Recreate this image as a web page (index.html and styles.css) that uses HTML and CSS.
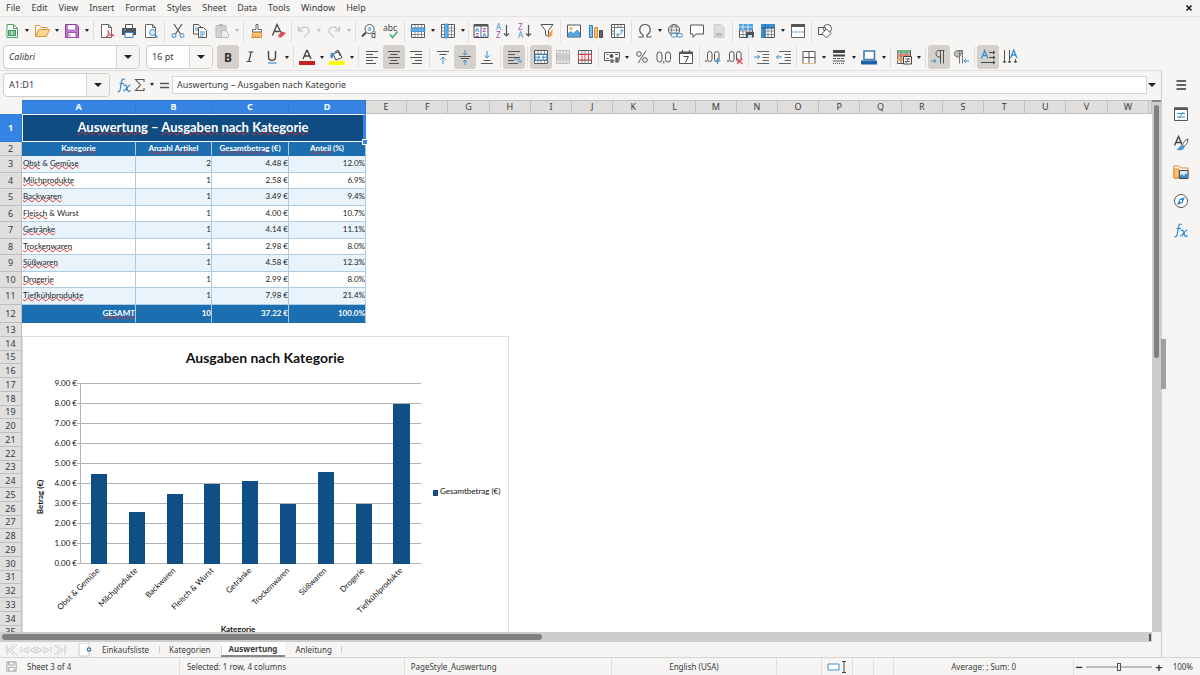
FILE: index.html
```html
<!DOCTYPE html>
<html lang="de">
<head>
<meta charset="utf-8">
<title>Auswertung</title>
<link rel="stylesheet" href="styles.css">
</head>
<body>
<svg class="sprite" aria-hidden="true">
  <symbol id="new" viewBox="0 0 16 16"><path d="M3 1.5h6.500l4 4v9h-10.500z" fill="#fff" stroke="#4aa564"/><path d="M9.500 1.500v4h4" fill="none" stroke="#4aa564"/><path d="M4 7h8v6h-8z" fill="#3a9c58"/><path d="M5 9h6M5 11h6M8 8v4" stroke="#fff" stroke-width=".7"/></symbol>
  <symbol id="open" viewBox="0 0 16 16"><path d="M1.500 13.500v-11h4l1.500 2h6v3" fill="#fff" stroke="#e0943c"/><path d="M1.500 13.500l3-7h11l-3 7z" fill="#fbd58d" stroke="#e0943c"/></symbol>
  <symbol id="save" viewBox="0 0 16 16"><path d="M1.500 1.500h11l2 2v11h-13z" fill="#c378cf" stroke="#8f3f9d"/><path d="M4 2h7v4.500h-7z" fill="#fff"/><path d="M4 9.500h8v5h-8z" fill="#fff" stroke="#8f3f9d" stroke-width=".8"/><path d="M6 11.500v2" stroke="#8f3f9d"/></symbol>
  <symbol id="pdf" viewBox="0 0 16 16"><path d="M2.500 1.500h7l3 3v10h-10z" fill="#fff" stroke="#666"/><path d="M9.500 1.500v3h3" fill="none" stroke="#666"/><path d="M9 7c1 4 3 6 6 6M9 8c1 3 0 5-2 7M7 14c2-2 5-3 8-2" fill="none" stroke="#d9404c"/></symbol>
  <symbol id="print" viewBox="0 0 16 16"><path d="M4.500 5v-3.500h7v3.500" fill="#fff" stroke="#555"/><path d="M1 5h14v7h-14z" fill="#4a5560"/><path d="M4 9.500h8v5h-8z" fill="#fff" stroke="#3b86c6"/><path d="M3 7h2" stroke="#7fc0f0"/></symbol>
  <symbol id="preview" viewBox="0 0 16 16"><path d="M2.500 1.500h7l3 3v10h-10z" fill="#fff" stroke="#666"/><path d="M9.500 1.500v3h3" fill="none" stroke="#666"/><circle cx="9.500" cy="9.500" r="3" fill="#d6ecfb" stroke="#3b8fd0"/><path d="M11.500 11.500l3 3" stroke="#3b8fd0" stroke-width="1.500"/></symbol>
  <symbol id="cut" viewBox="0 0 16 16"><path d="M4 1l6.500 10M12 1l-6.500 10" fill="none" stroke="#555" stroke-width="1.200"/><circle cx="4" cy="12.500" r="2" fill="none" stroke="#3b8fd0"/><circle cx="12" cy="12.500" r="2" fill="none" stroke="#3b8fd0"/></symbol>
  <symbol id="copy" viewBox="0 0 16 16"><path d="M1.500 1.500h5l2.500 2.500v7h-7.500z" fill="#fff" stroke="#555"/><path d="M6.500 4.500h5l3 3v7h-8z" fill="#fff" stroke="#555"/><path d="M3 5h3M3 7h3M8 9h5M8 11h5M8 13h3" stroke="#3b8fd0"/></symbol>
  <symbol id="paste" viewBox="0 0 16 16"><path d="M2 2.500h10v12h-10z" fill="#d2d2d2" stroke="#bbb"/><path d="M5 1h4v3h-4z" fill="#bbb"/><path d="M7.500 7.500h4l3 3v4h-7z" fill="#eee" stroke="#bbb"/></symbol>
  <symbol id="brush" viewBox="0 0 16 16"><path d="M7 1.500h2v5h3.500v2.500h-9v-2.500h3.500z" fill="#fff" stroke="#666"/><path d="M3.500 9.500h9v5h-10c1-1.500 1-3 1-5z" fill="#f9c97e" stroke="#d98a35"/><path d="M6 14v-2M9 14v-2" stroke="#d98a35"/></symbol>
  <symbol id="clear" viewBox="0 0 16 16"><path d="M1.500 12.500l4.500-11 4 8M3.500 8.500h5" fill="none" stroke="#444" stroke-width="1.300"/><path d="M7 12.500l4-4 4 1.500-5 4.500h-2z" fill="#e04552"/><path d="M7 12.500l2 2" stroke="#f6b0b5"/></symbol>
  <symbol id="undo" viewBox="0 0 16 16"><path d="M2.500 3v5h5M3 7.500c3-5 10-4 10 .5 0 3-3 4-5 6" fill="none" stroke="#c4c4c4" stroke-width="1.200"/></symbol>
  <symbol id="redo" viewBox="0 0 16 16"><path d="M13.500 3v5h-5M13 7.500c-3-5-10-4-10 .5 0 3 3 4 5 6" fill="none" stroke="#c4c4c4" stroke-width="1.200"/></symbol>
  <symbol id="find" viewBox="0 0 16 16"><circle cx="8.500" cy="6" r="4.500" fill="#fff" stroke="#555"/><path d="M5 9.500l-4 4" stroke="#444" stroke-width="1.800"/><text x="6.300" y="8.300" font-size="7" fill="#2b7fc4">a</text><text x="10" y="15" font-size="8" fill="#333">d</text></symbol>
  <symbol id="spell" viewBox="0 0 16 16"><text x="0" y="8" font-size="8.500" fill="#444">abc</text><path d="M7 11.500l2.500 3 5-6" fill="none" stroke="#3fae6a" stroke-width="1.500"/></symbol>
  <symbol id="grid" viewBox="0 0 16 16"><path d="M1.500 1.500h13v13h-13z" fill="#fff" stroke="#555"/><path d="M1.500 5h13M1.500 8h13M1.500 11.500h13M5 1.500v13M8 1.500v13M11.500 1.500v13" stroke="#777" stroke-width=".8"/></symbol>
  <symbol id="row" viewBox="0 0 16 16"><use href="#grid"/><path d="M1 5h14v3.500h-14z" fill="#5cb0ec" stroke="#2f80c2" stroke-width=".6"/></symbol>
  <symbol id="col" viewBox="0 0 16 16"><use href="#grid"/><path d="M4.500 1h3.500v14h-3.500z" fill="#5cb0ec" stroke="#2f80c2" stroke-width=".6"/></symbol>
  <symbol id="sort" viewBox="0 0 16 16"><path d="M1 1.500h14v13h-14z" fill="#fff" stroke="#444"/><path d="M1 1h14v2.500h-14z" fill="#555"/><path d="M8 3v11" stroke="#666"/><g font-size="6" font-weight="bold"><text x="2" y="8.500" fill="#3b8fd0">A</text><text x="2.500" y="14" fill="#a64fb5">Z</text><text x="9.500" y="8.500" fill="#a64fb5">Z</text><text x="9.300" y="14" fill="#3b8fd0">A</text></g></symbol>
  <symbol id="asc" viewBox="0 0 16 16"><text x="1" y="7" font-size="8" fill="#3b8fd0">A</text><text x="1" y="15" font-size="8" fill="#a64fb5">Z</text><path d="M11.500 2v11M9 10.500l2.500 2.500 2.500-2.500" fill="none" stroke="#555" stroke-width="1.200"/></symbol>
  <symbol id="desc" viewBox="0 0 16 16"><text x="1" y="7" font-size="8" fill="#a64fb5">Z</text><text x="1" y="15" font-size="8" fill="#3b8fd0">A</text><path d="M11.500 2v11M9 10.500l2.500 2.500 2.500-2.500" fill="none" stroke="#555" stroke-width="1.200"/></symbol>
  <symbol id="filter" viewBox="0 0 16 16"><path d="M2 1.500h12l-4.500 6v6l-3-1.500v-4.500z" fill="#fff" stroke="#555"/><path d="M9 15l1-5 4-4-1 5 1 1z" fill="#f2a74e"/></symbol>
  <symbol id="image" viewBox="0 0 16 16"><path d="M1.500 2h13v12h-13z" fill="#fff" stroke="#555"/><circle cx="5" cy="5.500" r="1.500" fill="#f2a74e"/><path d="M2 13.500v-3l3-2 2.500 2 3.500-3.500 3 3v3.500z" fill="#55a8e4" stroke="#2f80c2" stroke-width=".6"/></symbol>
  <symbol id="chart" viewBox="0 0 16 16"><path d="M1.500 2.500h3v12h-3z" fill="#7cc0f2" stroke="#2f80c2"/><path d="M6.500 4.500h3v10h-3z" fill="#fbc27a" stroke="#e0872c"/><path d="M11.500 7.500h3v7h-3z" fill="#666" stroke="#444"/></symbol>
  <symbol id="pivot" viewBox="0 0 16 16"><path d="M1.500 1.500h13v13h-13z" fill="#fff" stroke="#555"/><path d="M1.500 4.500h13M4.500 1.500v13M8 1.500v3M11 1.500v3M1.500 8h3M1.500 11h3" stroke="#777"/><path d="M7 12c4 0 5-2 5-5M10 8.500l2-2 2 2M8.500 10l-2 2 2 2" fill="none" stroke="#3b8fd0"/></symbol>
  <symbol id="omega" viewBox="0 0 16 16"><path d="M1.500 14h4.500v-2c-5-3-4-10.500 2-10.500s7 7.500 2 10.500v2h4.500" fill="none" stroke="#555" stroke-width="1.200"/></symbol>
  <symbol id="globe" viewBox="0 0 16 16"><circle cx="7" cy="7" r="5.500" fill="#fff" stroke="#555"/><ellipse cx="7" cy="7" rx="2.500" ry="5.500" fill="none" stroke="#666" stroke-width=".8"/><path d="M1.500 7h11M2.500 4h9M2.500 10h9" stroke="#666" stroke-width=".8"/><rect x="4" y="10.500" width="6" height="3.500" rx="1.700" fill="#fff" stroke="#3b8fd0"/><rect x="9.500" y="10.500" width="6" height="3.500" rx="1.700" fill="none" stroke="#3b8fd0"/></symbol>
  <symbol id="comment" viewBox="0 0 16 16"><path d="M1.500 2h13v9h-7.500l-3 3.500v-3.500h-2.500z" fill="#fff" stroke="#555"/></symbol>
  <symbol id="footer" viewBox="0 0 16 16"><path d="M3 1.500h7l3 3v10h-10z" fill="#ddd" stroke="#ccc"/><path d="M5 10h6v3h-6z" fill="#bbb"/></symbol>
  <symbol id="area" viewBox="0 0 16 16"><use href="#grid"/><path d="M1 1h14v6h-14z" fill="#4c9fdd"/><path d="M1 4h14M5 1v6M10 1v6" stroke="#fff" stroke-width=".7"/><path d="M8 9h8v5h-8z" fill="#4a5560"/><path d="M10 12h4v3h-4z" fill="#bfe0f7"/></symbol>
  <symbol id="freeze" viewBox="0 0 16 16"><use href="#grid"/><path d="M1 1h14v4h-10v10h-4z" fill="#3b8fd0"/><path d="M5 1v14M1 5h14" stroke="#1e5f96"/></symbol>
  <symbol id="split" viewBox="0 0 16 16"><path d="M1.500 1.500h13v13h-13z" fill="#fff" stroke="#666"/><path d="M1 1h14v3h-14z" fill="#555"/><path d="M1 9h14" stroke="#3b8fd0" stroke-dasharray="2.500 1"/></symbol>
  <symbol id="shapes" viewBox="0 0 16 16"><circle cx="10.500" cy="5.500" r="4" fill="#fff" stroke="#555"/><path d="M1.500 4.500h7v7h-7z" fill="none" stroke="#555"/><path d="M9.500 6l4.500 4.500-4.500 4.500-4.500-4.500z" fill="#fff" stroke="#555"/></symbol>
  <symbol id="bold" viewBox="0 0 16 16"><text x="4" y="12.500" font-size="12" font-weight="bold" fill="#333">B</text></symbol>
  <symbol id="italic" viewBox="0 0 16 16"><path d="M6.500 3h5M4.500 12.500h5M9.200 3l-2.400 9.500" stroke="#444" stroke-width="1.200"/></symbol>
  <symbol id="under" viewBox="0 0 16 16"><path d="M4.500 2v6c0 4.500 7 4.500 7 0v-6" fill="none" stroke="#444" stroke-width="1.400"/><path d="M4 14h8.500" stroke="#3b8fd0" stroke-width="1.200"/></symbol>
  <symbol id="color" viewBox="0 0 16 16"><path d="M4 10l3.700-8.500h.6l3.700 8.500M5.500 7h5" fill="none" stroke="#444" stroke-width="1.400"/><path d="M0 12h16v4h-16z" fill="#c9211e"/></symbol>
  <symbol id="fill" viewBox="0 0 16 16"><path d="M4 5l6-2.500 3 6-6 2.500z" fill="#fff" stroke="#444"/><path d="M6 3l3-2 2 6" fill="none" stroke="#444"/><path d="M1.500 9v-3.500c0-2 2-2 4-1.500l-2 5z" fill="#3b8fd0"/><path d="M0 12h16v4h-16z" fill="#ff0"/></symbol>
  <symbol id="left" viewBox="0 0 16 16"><path d="M2 2.500h12M2 5.500h7M2 8.500h12M2 11.500h7M2 14.500h10" stroke="#555"/></symbol>
  <symbol id="center" viewBox="0 0 16 16"><path d="M2 2.500h12M4.500 5.500h7M2 8.500h12M4.500 11.500h7M3 14.500h10" stroke="#555"/></symbol>
  <symbol id="right" viewBox="0 0 16 16"><path d="M2 2.500h12M7 5.500h7M2 8.500h12M7 11.500h7M4 14.500h10" stroke="#555"/></symbol>
  <symbol id="top" viewBox="0 0 16 16"><path d="M2 2.500h12M4.500 5.500h7" stroke="#555"/><path d="M8 15v-7M5.500 10.500l2.500-2.500 2.500 2.500" fill="none" stroke="#3b8fd0"/></symbol>
  <symbol id="middle" viewBox="0 0 16 16"><path d="M2 7.500h12M4 9.500h8" stroke="#555"/><path d="M8 1v5M6 4l2 2 2-2M8 16v-5M6 13l2-2 2 2" fill="none" stroke="#3b8fd0"/></symbol>
  <symbol id="bottom" viewBox="0 0 16 16"><path d="M2 14.500h12M4.500 11.500h7" stroke="#555"/><path d="M8 2v7M5.500 6.500l2.500 2.500 2.500-2.500" fill="none" stroke="#3b8fd0"/></symbol>
  <symbol id="wrap" viewBox="0 0 16 16"><path d="M2 2.500h12M2 5.500h7M2 8.500h12M2 11.500h6M2 14.500h10" stroke="#555"/><path d="M8 10h4c2 0 2 1 2 3M12 11.500l2 2 2-2" fill="none" stroke="#3b8fd0"/></symbol>
  <symbol id="merge" viewBox="0 0 16 16"><use href="#grid"/><path d="M2 5.500h12v5.500h-12z" fill="#fff" stroke="#2f80c2"/><path d="M2 8.200h5M14 8.200h-5M5 6.500l2 1.700-2 1.800M11 6.500l-2 1.700 2 1.800" fill="none" stroke="#3b8fd0"/></symbol>
  <symbol id="mergeoff" viewBox="0 0 16 16"><path d="M1.500 1.500h13v13h-13z" fill="#eee" stroke="#bbb"/><path d="M1.500 5h13M1.500 11h13M5 1.500v3.500M8 1.500v3.500M11.500 1.500v3.500M5 11v3.500M8 11v3.500M11.500 11v3.500" stroke="#bbb"/><path d="M2 6h12v4.500h-12z" fill="#ccc"/></symbol>
  <symbol id="unmerge" viewBox="0 0 16 16"><use href="#grid"/><path d="M1.500 5.500h13v5.500h-13zM5 5.500v5.500M8 5.500v5.500M11.500 5.500v5.500" fill="#fff" stroke="#d9404c"/></symbol>
  <symbol id="currency" viewBox="0 0 16 16"><path d="M.5 3.500h15v8h-15z" fill="#fff" stroke="#555"/><circle cx="7.500" cy="7" r="2" fill="#555"/><path d="M2.500 5.500h2M11 5.500h3M2.500 9.500h2" stroke="#555"/><path d="M6 10h4v4h-4zM11 8h4v6h-4z" fill="#666" stroke="#fff" stroke-width=".6"/></symbol>
  <symbol id="percent" viewBox="0 0 16 16"><circle cx="5" cy="5" r="2.300" fill="none" stroke="#555"/><circle cx="11" cy="11" r="2.300" fill="none" stroke="#555"/><path d="M12 2l-8 12" stroke="#555"/></symbol>
  <symbol id="number" viewBox="0 0 16 16"><rect x="1" y="3" width="5" height="10" rx="2.500" fill="none" stroke="#555"/><rect x="9.500" y="3" width="5" height="10" rx="2.500" fill="none" stroke="#555"/><path d="M7.800 12v2.500" stroke="#555"/></symbol>
  <symbol id="date" viewBox="0 0 16 16"><path d="M1.500 3h13v11.500h-13z" fill="#fff" stroke="#555"/><path d="M1.500 4h13" stroke="#555" stroke-width="2"/><path d="M4.500 1v2M11.500 1v2M5.500 7.500h5l-3 6" fill="none" stroke="#444"/></symbol>
  <symbol id="zeros" viewBox="0 0 16 16"><path d="M1 11v2" stroke="#555" stroke-width="1.200"/><rect x="2.500" y="2.500" width="4.500" height="10" rx="2.200" fill="none" stroke="#555"/><rect x="9.500" y="2.500" width="4.500" height="10" rx="2.200" fill="none" stroke="#555"/></symbol>
  <symbol id="decadd" viewBox="0 0 16 16"><use href="#zeros"/><path d="M12.500 9v6M9.500 12h6" stroke="#3b8fd0" stroke-width="1.200"/></symbol>
  <symbol id="decdel" viewBox="0 0 16 16"><use href="#zeros"/><path d="M10 9.500l5.500 5.500M15.500 9.500l-5.500 5.500" stroke="#e04552" stroke-width="1.200"/></symbol>
  <symbol id="indent" viewBox="0 0 16 16"><path d="M3 2.500h12M8.500 5.500h6.500M8.500 8.500h6.500M8.500 11.500h6.500M3 14.500h12" stroke="#666"/><path d="M0 8h5.500M3.500 6l2 2-2 2" fill="none" stroke="#3b8fd0"/></symbol>
  <symbol id="outdent" viewBox="0 0 16 16"><path d="M3 2.500h12M8.500 5.500h6.500M8.500 8.500h6.500M8.500 11.500h6.500M3 14.500h12" stroke="#666"/><path d="M6 8h-5.500M2.500 6l-2 2 2 2" fill="none" stroke="#3b8fd0"/></symbol>
  <symbol id="borders" viewBox="0 0 16 16"><path d="M2 2.500h12v12h-12zM8 2.500v12M2 8.500h12" fill="#fff" stroke="#555"/><path d="M2 14.500h12" stroke="#e6b97c"/></symbol>
  <symbol id="lines" viewBox="0 0 16 16"><path d="M2 2.500h12" stroke="#444" stroke-width="3"/><path d="M2 6.500h12" stroke="#444" stroke-width="2"/><path d="M2 9.500h12" stroke="#555" stroke-dasharray="3 1"/><path d="M2 12h12" stroke="#555"/><path d="M2 14.500h12" stroke="#555" stroke-dasharray="1 1"/></symbol>
  <symbol id="bcolor" viewBox="0 0 16 16"><path d="M3 2h10.500v8.500h-10.500z" fill="#fff" stroke="#3b7db5" stroke-width="1.600"/><path d="M0 11.500h16v4h-16z" fill="#1e63a4"/></symbol>
  <symbol id="cond" viewBox="0 0 16 16"><use href="#grid"/><path d="M1 1h13v3h-13z" fill="#6cc08b"/><path d="M1 5h13v3h-13z" fill="#ee8b72"/><path d="M1 9h6v3h-6z" fill="#f7b65c"/><path d="M1.500 1.500v12.500M5 1.500v12.500M10 1.500v6" stroke="#777" stroke-width=".7"/><path d="M7.500 7.500h8v7.500h-8z" fill="#fff" stroke="#444"/><path d="M9 10h5M9 12.500h5M13 9l-3 5" stroke="#444" stroke-width=".8"/></symbol>
  <symbol id="ltr" viewBox="0 0 16 16"><path d="M13.500 1.500h-5.500c-4 0-4 6.500 0 6.500h1.500M9.500 2v12.500M12.500 2v12.500" fill="none" stroke="#555"/><path d="M0 12h5M3 10l2 2-2 2" fill="none" stroke="#3b8fd0"/></symbol>
  <symbol id="rtl" viewBox="0 0 16 16"><path d="M9.500 1.500h-4.500c-5 0-5 6.500 0 6.500h1.500z" fill="#bbb" stroke="#777"/><path d="M6.500 2v12.500M9.500 2v12.500" stroke="#777"/><path d="M16 12h-5M13 10l-2 2 2 2" fill="none" stroke="#3b8fd0"/></symbol>
  <symbol id="htext" viewBox="0 0 16 16"><path d="M1.500 9.500l3.200-8 3.200 8M2.800 6.500h4" fill="none" stroke="#3b8fd0" stroke-width="1.300"/><path d="M9 3.500h6M9 8.500h6M1 13.500h14M13 2l2 1.500-2 1.500M13 7l2 1.500-2 1.500M13 12l2 1.500-2 1.500" fill="none" stroke="#444"/></symbol>
  <symbol id="vtext" viewBox="0 0 16 16"><path d="M8.500 9l3.200-8 3.200 8M9.800 6h4" fill="none" stroke="#3b8fd0" stroke-width="1.300"/><path d="M2.500 1v13M7.500 1v13M13.500 10v4M1 12l1.500 2 1.500-2M6 12l1.500 2 1.500-2M12 12l1.500 2 1.500-2" fill="none" stroke="#555"/></symbol>
  <symbol id="fx" viewBox="0 0 16 16"><path d="M9 2.500c-2-1.200-3 0-3.400 2l-1.400 8c-.4 2-1.400 2.600-2.700 2M3.500 6.500h4.500" fill="none" stroke="#2f86cc" stroke-width="1.200"/><path d="M7.500 8.500c2.500-1.500 2.500 0 3.500 3s1.500 3.500 3.500 2M14.500 8c-3 0-4 6-7.500 6" fill="none" stroke="#2f86cc" stroke-width="1.200"/></symbol>
  <symbol id="sigma" viewBox="0 0 16 16"><path d="M12 5v-2.500h-8.500l5 5.500-5 5.500h8.500v-2.500" fill="none" stroke="#555" stroke-width="1.100"/></symbol>
  <symbol id="equal" viewBox="0 0 16 16"><path d="M4 6.500h9M4 10.500h9" stroke="#555" stroke-width="1.600"/></symbol>
  <symbol id="menu" viewBox="0 0 16 16"><path d="M3.500 4h9.500M3.500 8h9.500M3.500 12h9.500" stroke="#333" stroke-width="1.500"/></symbol>
  <symbol id="props" viewBox="0 0 16 16"><path d="M1.500 2h13v12.500h-13z" fill="#fff" stroke="#555"/><path d="M1 1.500h14v2.500h-14z" fill="#555"/><path d="M4 7.500h8M4 11h8M10 6l-2 3M8 9.500l-2 3" stroke="#3b8fd0"/></symbol>
  <symbol id="styles" viewBox="0 0 16 16"><path d="M1.500 10.500l4-9 3.500 8M3 7.500h5" fill="none" stroke="#444" stroke-width="1.400"/><path d="M15 4c-3 1-5 4-5.500 6l1.500 1.500c2-1.500 4-4 4-7.500z" fill="#fff" stroke="#555"/><path d="M9 10.500c-3 0-2 3-5 4 4 1 7 0 7-2.500z" fill="#4c9fdd" stroke="#2f80c2" stroke-width=".6"/></symbol>
  <symbol id="gallery" viewBox="0 0 16 16"><path d="M1 14v-12h5l1.500 2h7.500v10z" fill="#fff" stroke="#e0872c"/><path d="M1 14v-9h5v9z" fill="#f8c16e" stroke="#e0872c"/><path d="M6.500 6.500h8.500v8h-8.500z" fill="#d8eefc" stroke="#444"/><path d="M7 14v-2l2-2 2 2 2-3 1.500 2v3z" fill="#3b8fd0"/></symbol>
  <symbol id="navigator" viewBox="0 0 16 16"><circle cx="8" cy="8" r="6.500" fill="#fff" stroke="#555"/><path d="M12 4l-2.500 6-5.500 2 2.500-6z" fill="#2f86cc"/><circle cx="8" cy="8" r="1.200" fill="#fff"/></symbol>
</svg>

<nav class="menubar">
  <button>File</button><button>Edit</button><button>View</button><button>Insert</button><button>Format</button><button>Styles</button><button>Sheet</button><button>Data</button><button>Tools</button><button>Window</button><button>Help</button>
  <button class="close" aria-label="Close"><svg viewBox="0 0 8 8"><path d="M1.500 1.500l5 5M6.500 1.500l-5 5" stroke="#222" stroke-width="1.700"/></svg></button>
</nav>

<div class="toolbar standard">
  <button class="tb" aria-label="New"><svg><use href="#new"/></svg></button><button class="drop" aria-label="New options"></button>
  <button class="tb" aria-label="Open"><svg><use href="#open"/></svg></button><button class="drop" aria-label="Recent files"></button>
  <button class="tb" aria-label="Save"><svg><use href="#save"/></svg></button><button class="drop" aria-label="Save options"></button>
  <span class="sep"></span>
  <button class="tb" aria-label="Export PDF"><svg><use href="#pdf"/></svg></button>
  <button class="tb" aria-label="Print"><svg><use href="#print"/></svg></button>
  <button class="tb" aria-label="Preview"><svg><use href="#preview"/></svg></button>
  <span class="sep"></span>
  <button class="tb" aria-label="Cut"><svg><use href="#cut"/></svg></button>
  <button class="tb" aria-label="Copy"><svg><use href="#copy"/></svg></button>
  <button class="tb" aria-label="Paste"><svg><use href="#paste"/></svg></button><button class="drop off" aria-label="Paste options"></button>
  <span class="sep"></span>
  <button class="tb" aria-label="Clone"><svg><use href="#brush"/></svg></button>
  <button class="tb" aria-label="Clear"><svg><use href="#clear"/></svg></button>
  <span class="sep narrow"></span>
  <button class="tb" aria-label="Undo"><svg><use href="#undo"/></svg></button><button class="drop off" aria-label="Undo list"></button>
  <button class="tb" aria-label="Redo"><svg><use href="#redo"/></svg></button><button class="drop off" aria-label="Redo list"></button>
  <span class="sep"></span>
  <button class="tb" aria-label="Find"><svg><use href="#find"/></svg></button>
  <button class="tb" aria-label="Spelling"><svg><use href="#spell"/></svg></button>
  <span class="sep"></span>
  <button class="tb" aria-label="Row"><svg><use href="#row"/></svg></button><button class="drop" aria-label="Row options"></button>
  <button class="tb" aria-label="Column"><svg><use href="#col"/></svg></button><button class="drop" aria-label="Column options"></button>
  <span class="sep narrow"></span>
  <button class="tb" aria-label="Sort"><svg><use href="#sort"/></svg></button>
  <button class="tb" aria-label="Ascending"><svg><use href="#asc"/></svg></button>
  <button class="tb" aria-label="Descending"><svg><use href="#desc"/></svg></button>
  <button class="tb" aria-label="Filter"><svg><use href="#filter"/></svg></button>
  <span class="sep"></span>
  <button class="tb" aria-label="Image"><svg><use href="#image"/></svg></button>
  <button class="tb" aria-label="Chart"><svg><use href="#chart"/></svg></button>
  <button class="tb" aria-label="Pivot"><svg><use href="#pivot"/></svg></button>
  <span class="sep"></span>
  <button class="tb" aria-label="Symbol"><svg><use href="#omega"/></svg></button><button class="drop" aria-label="Symbols"></button>
  <button class="tb" aria-label="Link"><svg><use href="#globe"/></svg></button>
  <button class="tb" aria-label="Comment"><svg><use href="#comment"/></svg></button>
  <button class="tb" aria-label="Headers"><svg><use href="#footer"/></svg></button>
  <span class="sep"></span>
  <button class="tb" aria-label="Print area"><svg><use href="#area"/></svg></button>
  <button class="tb" aria-label="Freeze"><svg><use href="#freeze"/></svg></button><button class="drop" aria-label="Freeze options"></button>
  <button class="tb" aria-label="Split"><svg><use href="#split"/></svg></button>
  <span class="sep"></span>
  <button class="tb" aria-label="Shapes"><svg><use href="#shapes"/></svg></button>
</div>

<div class="toolbar formatting">
  <div class="combo font"><input value="Calibri" aria-label="Font name"><button aria-label="Fonts"></button></div>
  <div class="combo size"><input value="16 pt" aria-label="Font size"><button aria-label="Sizes"></button></div>
  <button class="tb on" aria-label="Bold"><svg><use href="#bold"/></svg></button>
  <button class="tb" aria-label="Italic"><svg><use href="#italic"/></svg></button>
  <button class="tb" aria-label="Underline"><svg><use href="#under"/></svg></button><button class="drop" aria-label="Underline options"></button>
  <span class="sep"></span>
  <button class="tb" aria-label="Font color"><svg><use href="#color"/></svg></button><button class="drop" aria-label="Font colors"></button>
  <button class="tb" aria-label="Background"><svg><use href="#fill"/></svg></button><button class="drop" aria-label="Background colors"></button>
  <span class="sep"></span>
  <button class="tb" aria-label="Left"><svg><use href="#left"/></svg></button>
  <button class="tb on" aria-label="Center"><svg><use href="#center"/></svg></button>
  <button class="tb" aria-label="Right"><svg><use href="#right"/></svg></button>
  <span class="sep"></span>
  <button class="tb" aria-label="Top"><svg><use href="#top"/></svg></button>
  <button class="tb on" aria-label="Middle"><svg><use href="#middle"/></svg></button>
  <button class="tb" aria-label="Bottom"><svg><use href="#bottom"/></svg></button>
  <span class="sep"></span>
  <button class="tb on" aria-label="Wrap"><svg><use href="#wrap"/></svg></button>
  <span class="sep"></span>
  <button class="tb on" aria-label="Merge and center"><svg><use href="#merge"/></svg></button>
  <button class="tb" aria-label="Merge"><svg><use href="#mergeoff"/></svg></button>
  <button class="tb" aria-label="Unmerge"><svg><use href="#unmerge"/></svg></button>
  <span class="sep"></span>
  <button class="tb" aria-label="Currency"><svg><use href="#currency"/></svg></button><button class="drop" aria-label="Currencies"></button>
  <button class="tb" aria-label="Percent"><svg><use href="#percent"/></svg></button>
  <button class="tb" aria-label="Number"><svg><use href="#number"/></svg></button>
  <button class="tb" aria-label="Date"><svg><use href="#date"/></svg></button>
  <span class="sep"></span>
  <button class="tb" aria-label="Add decimal"><svg><use href="#decadd"/></svg></button>
  <button class="tb" aria-label="Delete decimal"><svg><use href="#decdel"/></svg></button>
  <span class="sep"></span>
  <button class="tb" aria-label="Indent"><svg><use href="#indent"/></svg></button>
  <button class="tb" aria-label="Outdent"><svg><use href="#outdent"/></svg></button>
  <span class="sep narrow"></span>
  <button class="tb" aria-label="Borders"><svg><use href="#borders"/></svg></button><button class="drop" aria-label="Border options"></button>
  <button class="tb" aria-label="Border style"><svg><use href="#lines"/></svg></button><button class="drop" aria-label="Border styles"></button>
  <button class="tb" aria-label="Border color"><svg><use href="#bcolor"/></svg></button><button class="drop" aria-label="Border colors"></button>
  <span class="sep"></span>
  <button class="tb" aria-label="Conditional"><svg><use href="#cond"/></svg></button><button class="drop" aria-label="Conditional options"></button>
  <span class="sep"></span>
  <button class="tb on" aria-label="Left to right"><svg><use href="#ltr"/></svg></button>
  <button class="tb" aria-label="Right to left"><svg><use href="#rtl"/></svg></button>
  <span class="sep"></span>
  <button class="tb on" aria-label="Horizontal text"><svg><use href="#htext"/></svg></button>
  <button class="tb" aria-label="Vertical text"><svg><use href="#vtext"/></svg></button>
</div>

<main class="workspace">
  <section class="document">
    <div class="formulabar">
      <div class="combo name"><input value="A1:D1" aria-label="Name box"><button aria-label="Names"></button></div>
      <button class="fb" aria-label="Function wizard"><svg><use href="#fx"/></svg></button>
      <button class="fb" aria-label="Sum"><svg><use href="#sigma"/></svg></button><button class="drop" aria-label="Sum functions"></button>
      <button class="fb" aria-label="Formula"><svg><use href="#equal"/></svg></button>
      <input class="formula" value="Auswertung – Ausgaben nach Kategorie" aria-label="Input line">
      <button class="drop big" aria-label="Expand"></button>
    </div>
    <div class="view">
      <div class="sheet">
        <table class="cells">
          <colgroup><col class="c-row"><col class="c-a"><col class="c-b"><col class="c-c"><col class="c-d"><col span="19"><col class="c-end"></colgroup>
          <thead><tr><th></th><th class="sel">A</th><th class="sel">B</th><th class="sel">C</th><th class="sel">D</th><th>E</th><th>F</th><th>G</th><th>H</th><th>I</th><th>J</th><th>K</th><th>L</th><th>M</th><th>N</th><th>O</th><th>P</th><th>Q</th><th>R</th><th>S</th><th>T</th><th>U</th><th>V</th><th>W</th><th></th></tr></thead>
          <tbody class="data">
            <tr class="title"><th class="sel">1</th><td colspan="4"><u>Auswertung</u> – <u>Ausgaben</u> <u>nach</u> <u>Kategorie</u></td></tr>
            <tr class="head"><th>2</th><td><u>Kategorie</u></td><td><u>Anzahl</u> <u>Artikel</u></td><td><u>Gesamtbetrag</u> (€)</td><td><u>Anteil</u> (%)</td></tr>
            <tr><th>3</th><td><u>Obst</u> &amp; <u>Gemüse</u></td><td>2</td><td>4.48 €</td><td>12.0%</td></tr>
            <tr><th>4</th><td><u>Milchprodukte</u></td><td>1</td><td>2.58 €</td><td>6.9%</td></tr>
            <tr><th>5</th><td><u>Backwaren</u></td><td>1</td><td>3.49 €</td><td>9.4%</td></tr>
            <tr><th>6</th><td><u>Fleisch</u> &amp; Wurst</td><td>1</td><td>4.00 €</td><td>10.7%</td></tr>
            <tr><th>7</th><td><u>Getränke</u></td><td>1</td><td>4.14 €</td><td>11.1%</td></tr>
            <tr><th>8</th><td><u>Trockenwaren</u></td><td>1</td><td>2.98 €</td><td>8.0%</td></tr>
            <tr><th>9</th><td><u>Süßwaren</u></td><td>1</td><td>4.58 €</td><td>12.3%</td></tr>
            <tr><th>10</th><td><u>Drogerie</u></td><td>1</td><td>2.99 €</td><td>8.0%</td></tr>
            <tr><th>11</th><td><u>Tiefkühlprodukte</u></td><td>1</td><td>7.98 €</td><td>21.4%</td></tr>
            <tr class="total"><th>12</th><td><u>GESAMT</u></td><td>10</td><td>37.22 €</td><td>100.0%</td></tr>
          </tbody>
          <tbody class="empty">
            <tr><th>13</th></tr><tr><th>14</th></tr><tr><th>15</th></tr><tr><th>16</th></tr><tr><th>17</th></tr><tr><th>18</th></tr><tr><th>19</th></tr><tr><th>20</th></tr><tr><th>21</th></tr><tr><th>22</th></tr><tr><th>23</th></tr><tr><th>24</th></tr><tr><th>25</th></tr><tr><th>26</th></tr><tr><th>27</th></tr><tr><th>28</th></tr><tr><th>29</th></tr><tr><th>30</th></tr><tr><th>31</th></tr><tr><th>32</th></tr><tr><th>33</th></tr><tr><th>34</th></tr><tr><th>35</th></tr>
          </tbody>
        </table>
        <span class="handle"></span>
        <svg class="diagram" viewBox="0 0 487 310" role="img" aria-label="Ausgaben nach Kategorie">
          <rect x="0.500" y="0.500" width="486" height="320" fill="#fff" stroke="#dedede"/>
          <text class="d-title" x="243" y="27">Ausgaben nach Kategorie</text>
          <path class="d-grid" d="M55 47.500h344M55 67.500h344M55 87.500h344M55 107.500h344M55 127.500h344M55 147.500h344M55 167.500h344M55 187.500h344M55 207.500h344M55 227.500h344M58.500 47v180"/>
          <g class="d-axis">
            <text x="55" y="50">9.00 €</text><text x="55" y="70">8.00 €</text><text x="55" y="90">7.00 €</text><text x="55" y="110">6.00 €</text><text x="55" y="130">5.00 €</text><text x="55" y="150">4.00 €</text><text x="55" y="170">3.00 €</text><text x="55" y="190">2.00 €</text><text x="55" y="210">1.00 €</text><text x="55" y="230">0.00 €</text>
          </g>
          <g class="d-bars">
            <rect x="69" y="138" width="16" height="90"/><rect x="107" y="176" width="16" height="52"/><rect x="145" y="158" width="16" height="70"/><rect x="182" y="148" width="16" height="80"/><rect x="220" y="145" width="16" height="83"/><rect x="258" y="168" width="16" height="60"/><rect x="296" y="136" width="16" height="92"/><rect x="334" y="168" width="16" height="60"/><rect x="371" y="68" width="17" height="160"/>
            <rect x="411" y="154" width="5" height="6"/>
          </g>
          <g class="d-axis">
            <text transform="translate(78 235) rotate(-45)">Obst &amp; Gemüse</text><text transform="translate(116 235) rotate(-45)">Milchprodukte</text><text transform="translate(154 235) rotate(-45)">Backwaren</text><text transform="translate(192 235) rotate(-45)">Fleisch &amp; Wurst</text><text transform="translate(230 235) rotate(-45)">Getränke</text><text transform="translate(268 235) rotate(-45)">Trockenwaren</text><text transform="translate(305 235) rotate(-45)">Süßwaren</text><text transform="translate(343 235) rotate(-45)">Drogerie</text><text transform="translate(381 235) rotate(-45)">Tiefkühlprodukte</text>
          </g>
          <text class="d-name" transform="translate(21 161) rotate(-90)">Betrag (€)</text>
          <text class="d-name" x="216" y="296">Kategorie</text>
          <text class="d-legend" x="418" y="158">Gesamtbetrag (€)</text>
        </svg>
      </div>
      <div class="vscroll"><span class="thumb"></span></div>
    </div>
    <div class="hscroll"><span class="thumb"></span><span class="stop"></span></div>
    <div class="tabs">
      <button class="nav" aria-label="Scroll sheets"><svg class="navicons" viewBox="0 0 60 14"><path d="M1 2v10M11 2l-6 5 6 5M8 2l-6 5 6 5M15 4v6M22 4l-5 3 5 3zM29 4l-5 3 5 3zM31 4l5 3-5 3zM38 4l5 3-5 3zM45 4v6M48 2l6 5-6 5M51 2l6 5-6 5M59 2v10" fill="none" stroke="#ccc"/></svg></button>
      <button class="add" aria-label="Add sheet"><svg class="addicon" viewBox="0 0 14 14"><path d="M1 0h10v13h-10z" fill="#fff" stroke="#ccc"/><circle cx="11" cy="6.500" r="2.300" fill="#2b6cb0"/><path d="M9.700 6.500h2.600M11 5.200v2.600" stroke="#fff" stroke-width=".8"/></svg></button>
      <button class="tab">Einkaufsliste</button><button class="tab">Kategorien</button><button class="tab active">Auswertung</button><button class="tab">Anleitung</button>
    </div>
  </section>
  <aside class="sidebar">
    <button aria-label="Sidebar settings"><svg><use href="#menu"/></svg></button>
    <button aria-label="Properties"><svg><use href="#props"/></svg></button>
    <button aria-label="Styles"><svg><use href="#styles"/></svg></button>
    <button aria-label="Gallery"><svg><use href="#gallery"/></svg></button>
    <button aria-label="Navigator"><svg><use href="#navigator"/></svg></button>
    <button aria-label="Functions"><svg><use href="#fx"/></svg></button>
    <span class="grip"></span>
  </aside>
</main>

<footer class="status">
  <div class="s-sheet"><svg viewBox="0 0 12 12"><path d="M1 1h10v10h-10zM3 1v3.500h6v-3.500M3 11v-4h6v4" fill="#fff" stroke="#999"/></svg>Sheet 3 of 4</div>
  <div class="s-select">Selected: 1 row, 4 columns</div>
  <div class="s-page">PageStyle_Auswertung</div>
  <div class="s-lang">English (USA)</div>
  <div class="s-gap"></div>
  <div class="s-mode"><svg class="mode" viewBox="0 0 20 12"><path d="M1 3h11v6h-11z" fill="#fff" stroke="#3b8fd0"/><path d="M17 1v10M15 .5h4M15 11.500h4" stroke="#444"/></svg></div>
  <div class="s-small"></div>
  <div class="s-small"></div>
  <div class="s-sum">Average: ; Sum: 0</div>
  <div class="s-zoom"><button aria-label="Zoom out">−</button><input type="range" min="0" max="100" value="50" aria-label="Zoom"><button aria-label="Zoom in">+</button><span>100%</span></div>
</footer>
</body>
</html>
```
FILE: styles.css
```css
* { box-sizing: border-box; }
body {
  margin: 0;
  height: 100vh;
  display: flex;
  flex-direction: column;
  overflow: hidden;
  background: #f6f5f4;
  color: #3a3a3a;
  font: 9px/12px "Noto Sans", sans-serif;
}
button, input { font: inherit; color: inherit; margin: 0; padding: 0; border: 0; background: none; }
input { min-width: 0; outline: 0; }
svg { display: block; flex: none; }
svg text { font-family: "Noto Sans", sans-serif; }
.sprite { display: none; }

.menubar { display: flex; align-items: center; gap: 11px; height: 17px; padding: 0 7px 0 6px; border-bottom: 1px solid #e6e4e2; }
.menubar .close { margin-left: auto; }
.close svg { width: 8px; height: 8px; }

.toolbar { display: flex; align-items: center; flex: none; }
.standard { height: 27px; padding-left: 1px; }
.formatting { height: 26px; padding-left: 3px; }
.tb { display: flex; align-items: center; justify-content: center; flex: none; width: 22px; height: 24px; border-radius: 3px; }
.tb svg, .fb svg, .sidebar svg { width: 16px; height: 16px; }
.tb.on { background: #d4d0cc; }
.drop { display: flex; align-items: center; justify-content: center; flex: none; width: 8px; height: 20px; }
.drop::after, .combo button::after { content: ""; border: 2px solid transparent; border-top: 3px solid #222; border-bottom: 0; }
.drop.off::after { border-top-color: #bbb; }
.drop.big::after, .combo button::after { border-width: 4px 4px 0; }
.sep { flex: none; width: 1px; height: 22px; margin: 0 2px; background: #e2e0de; }
.sep.narrow { margin: 0 1px; }

.combo { display: flex; flex: none; height: 24px; border: 1px solid #d0ccc8; border-radius: 4px; background: #fff; overflow: hidden; }
.combo input { flex: 1; padding-left: 5px; }
.combo button { display: flex; align-items: center; justify-content: center; width: 23px; border-left: 1px solid #d8d5d2; background: #f6f5f4; }
.combo.font { width: 137px; margin-right: 6px; }
.combo.font input { font-style: italic; }
.combo.size { width: 67px; margin-right: 4px; }
.combo.name { width: 107px; margin-right: 6px; }

.workspace { flex: 1; display: flex; min-height: 0; }
.document { flex: 1; min-width: 0; display: flex; flex-direction: column; }
.formulabar { display: flex; align-items: center; flex: none; height: 30px; padding: 0 4px 2px 3px; border-top: 1px solid #e2e0de; }
.fb { width: 16px; }
.formula { flex: 1; height: 18px; padding-left: 4px; border: 1px solid #d8d5d2; background: #fff; }
.formulabar .drop.big { width: 10px; }

.view { flex: 1; display: flex; min-height: 0; }
.sheet { flex: 1; position: relative; min-width: 0; overflow: hidden; background: #fff; }
.cells { width: 100%; table-layout: fixed; border-collapse: separate; border-spacing: 0; }
.c-row { width: 22px; }
.c-a { width: 114px; }
.c-b { width: 76px; }
.c-c, .c-d { width: 77px; }
.c-end { width: 3px; }
.cells th { padding: 0; height: 14px; background: #e0dfde; border: solid #c0bfbe; border-width: 0 1px 1px 0; font-weight: 400; line-height: 12px; overflow: hidden; }
.cells thead th { border-top: 1px solid #c0bfbe; line-height: 12px; }
.cells thead th:first-child { background: #f6f5f4; border-color: #f6f5f4; }
.cells th.sel, .cells thead th.sel { background: #3584e4; border-color: #3077d0; color: #fff; font-weight: 700; }
.data td { padding: 1px 0 0 1px; height: 16px; border: solid #aecbe2; border-width: 0 1px 1px 0; font: 8px/12px Lato, sans-serif; color: #222; text-align: right; vertical-align: top; white-space: nowrap; overflow: hidden; }
.data tr:nth-child(odd) td { height: 17px; background: #e9f3fc; }
.data td:nth-child(2) { text-align: left; }
.data u { text-decoration: underline wavy #e0302c 1px; text-underline-offset: -1px; text-decoration-skip-ink: none; }
.data tr.title td { height: 28px; padding: 0; background: #0f4c81; border: 1px solid #fff; border-right: 3px solid #3584e4; color: #fff; font-size: 13px; font-weight: 700; line-height: 24px; text-align: center; }
.data tr.head td, .data tr.total td { background: #1b6fb0; color: #fff; font-weight: 700; border-bottom-color: #1b6fb0; }
.data tr.head td { height: 14px; padding: 0; text-align: center; }
.data tr.total td { height: 18px; padding-top: 2px; text-align: right; }
.empty tr:nth-child(4n+3) th { height: 13px; line-height: 12px; }
.handle { position: absolute; left: 363px; top: 40px; width: 4px; height: 4px; background: #3584e4; outline: 1px solid #fff; }
.diagram { position: absolute; left: 22px; top: 236px; width: 487px; height: 310px; }
.diagram text { font-family: Lato, sans-serif; font-size: 8px; fill: #111; }
.diagram .d-title { font-size: 14px; font-weight: 700; text-anchor: middle; }
.d-grid { stroke: #b3b3b3; fill: none; }
.d-axis text { text-anchor: end; }
.d-bars { fill: #0f4f86; }
.diagram .d-name { font-weight: 700; text-anchor: middle; }

.vscroll { width: 9px; padding: 3px 2px 0; background: #cdcdcd; border-top: 2px solid #888; }
.vscroll .thumb { display: block; width: 5px; height: 48%; border-radius: 3px; background: #808080; }
.hscroll { display: flex; align-items: center; justify-content: space-between; flex: none; height: 10px; margin-right: 9px; padding: 0 1px 0 2px; background: #cdcdcd; }
.hscroll .thumb { width: 47%; height: 6px; border-radius: 3px; background: #808080; }
.hscroll .stop { width: 2px; height: 7px; background: #555; }
.tabs { display: flex; flex: none; height: 15px; padding-left: 6px; font-size: 8px; }
.nav { margin-right: 12px; }
.navicons { width: 60px; height: 14px; }
.addicon { width: 14px; height: 14px; }
.tab { position: relative; padding: 0 10px; }
.tab + .tab::before { content: ""; position: absolute; left: 0; top: 4px; height: 7px; border-left: 1px solid #ccc; }
.tab:last-child::after { content: ""; position: absolute; right: 0; top: 4px; height: 7px; border-left: 1px solid #ccc; }
.tab.active { padding: 0 8px; background: #fff; font-weight: 700; border-bottom: 2px solid #888; }
.tab.active + .tab::before { display: none; }

.sidebar { position: relative; flex: none; width: 39px; display: flex; flex-direction: column; align-items: center; gap: 13px; padding-top: 7px; border-left: 1px solid #d0cecc; }
.sidebar .grip { position: absolute; left: -1px; top: 269px; width: 5px; height: 50px; background: #a0a0a0; }

.status { display: flex; flex: none; height: 18px; border-top: 1px solid #d5d3d1; font-size: 8px; }
.status > div { display: flex; align-items: center; justify-content: center; min-width: 0; padding: 0; border-right: 1px solid #e2e0de; white-space: nowrap; }
.status .s-sheet { flex: 177 1 0; justify-content: flex-start; gap: 10px; padding-left: 6px; }
.s-sheet svg { width: 11px; height: 11px; }
.status .s-select { flex: 222 1 0; justify-content: flex-start; padding-left: 7px; }
.status .s-page { flex: 205 1 0; justify-content: flex-start; padding-left: 6px; }
.status .s-lang { flex: 168 1 0; }
.status .s-gap { flex: 45 1 0; }
.status .s-mode { flex: 31 1 0; }
.mode { width: 20px; height: 12px; }
.status .s-small { flex: 20 1 0; }
.status .s-sum { flex: 183 1 0; }
.status .s-zoom { flex: 0 0 126px; border: 0; padding-right: 7px; gap: 2px; }
.s-zoom button { width: 10px; font-size: 13px; font-weight: 700; }
.s-zoom span { margin-left: auto; }
.s-zoom input { appearance: none; width: 66px; height: 10px; }
.s-zoom input::-webkit-slider-runnable-track { height: 2px; background: #bbb; }
.s-zoom input::-webkit-slider-thumb { appearance: none; width: 4px; height: 8px; margin-top: -3px; border: 1px solid #555; background: #eee; }
```
